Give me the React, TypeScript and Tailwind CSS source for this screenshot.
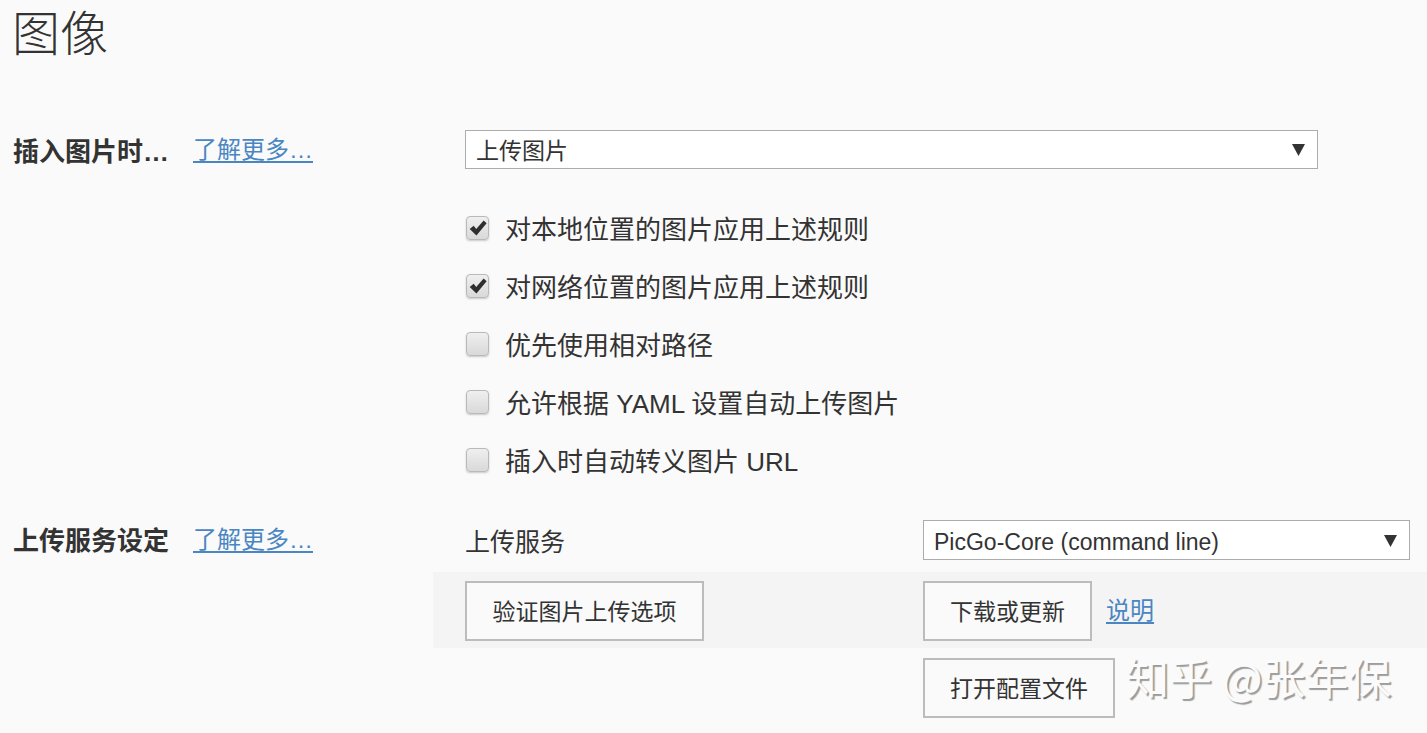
import React from "react";

const FONT = "font-['Liberation_Sans','Noto_Sans_CJK_SC',sans-serif]";

const Arrow = () => (
  <svg width="13" height="13" viewBox="0 0 13 13" className="shrink-0">
    <path d="M0 1 L13 1 L6.5 13 Z" fill="#333" />
  </svg>
);

// 假的下拉框：白底灰边 + 黑色三角
const SelectBox: React.FC<{ value: string; width: string; text: string }> = ({
  value,
  width,
  text,
}) => (
  <div
    className={`${width} h-[39px] shrink-0 bg-white border border-[#acacac] flex items-center justify-between pl-[10px] pr-[12px] ${text}`}
  >
    <span className="leading-none translate-y-[2px]">{value}</span>
    <Arrow />
  </div>
);

const Check: React.FC<{ checked?: boolean; label: string }> = ({
  checked,
  label,
}) => (
  <div className="h-[58px] flex items-center">
    <span className="ml-[1px] shrink-0 w-[23px] h-[24px] rounded-[4px] border border-[#b9b9b9] bg-gradient-to-b from-[#efefef] to-[#d9d9d9] shadow-[0_1px_2px_rgba(0,0,0,0.2)] flex items-center justify-center">
      {checked && (
        <svg width="18" height="16" viewBox="0 0 15 13">
          <path
            d="M0.6 7.4 L3.9 4.6 L6 7.4 L12.2 0.2 L14.7 2.5 L6.2 12.8 Z"
            fill="#2e2e2e"
          />
        </svg>
      )}
    </span>
    <span className="ml-[16px] text-[26px] leading-none text-[#333] translate-y-[2px]">
      {label}
    </span>
  </div>
);

const Btn: React.FC<{ label: string; width: string }> = ({ label, width }) => (
  <button
    className={`${width} h-[60px] border-2 border-[#bcbcbc] bg-[#fafafa] text-[23px] text-[#333] flex items-center justify-center ${FONT}`}
  >
    <span className="translate-y-[1px]">{label}</span>
  </button>
);

const LearnMore = () => (
  <a className="text-[24px] text-[#4a86c2] underline underline-offset-[3px] decoration-[1.5px] leading-none">
    了解更多…
  </a>
);

export default function App() {
  return (
    <div className={`relative min-h-screen bg-[#fafafa] text-[#333] ${FONT}`}>
      <h1 className="pl-[12px] pt-[5px] text-[48px] leading-[60px] font-light text-[#333]">
        图像
      </h1>

      {/* 插入图片时 */}
      <div className="mt-[65px] flex items-center h-[39px]">
        <div className="w-[465px] pl-[13px] flex items-center">
          <span className="w-[180px] text-[26px] font-bold leading-none translate-y-[2px]">
            插入图片时…
          </span>
          <LearnMore />
        </div>
        <SelectBox value="上传图片" width="w-[853px]" text="text-[23px]" />
      </div>

      <div className="pl-[465px] mt-[30px] flex flex-col">
        <Check checked label="对本地位置的图片应用上述规则" />
        <Check checked label="对网络位置的图片应用上述规则" />
        <Check label="优先使用相对路径" />
        <Check label="允许根据 YAML 设置自动上传图片" />
        <Check label="插入时自动转义图片 URL" />
      </div>

      {/* 上传服务设定 */}
      <div className="mt-[31px] flex pb-[17px]">
        <div className="w-[433px] pl-[13px] h-[40px] flex items-center">
          <span className="w-[180px] text-[26px] font-bold leading-none translate-y-[1px]">
            上传服务设定
          </span>
          <LearnMore />
        </div>
        <div className="flex-1 flex flex-col">
          <div className="pl-[32px] flex items-center h-[40px]">
            <span className="w-[458px] text-[25px] leading-none translate-y-[2px]">
              上传服务
            </span>
            <SelectBox
              value="PicGo-Core (command line)"
              width="w-[487px] h-[40px]"
              text="text-[23px]"
            />
          </div>
          <div className="mt-[12px] bg-[#f4f4f4] pl-[32px] pt-[9px] pb-[7px] flex">
            <div className="w-[458px]">
              <Btn label="验证图片上传选项" width="w-[239px]" />
            </div>
            <div className="flex items-center gap-[14px]">
              <Btn label="下载或更新" width="w-[169px]" />
              <a className="text-[24px] text-[#4a86c2] underline underline-offset-[3px] decoration-[1.5px] leading-none">
                说明
              </a>
            </div>
          </div>
          <div className="mt-[10px] pl-[490px]">
            <Btn label="打开配置文件" width="w-[192px]" />
          </div>
        </div>
      </div>

      {/* 水印 */}
      <div className="absolute left-[1126px] top-[648px] text-[43px] leading-[56px] text-[#fbfbfb] [text-shadow:2px_2px_1px_#9c9c9c] font-['Noto_Sans_CJK_SC',sans-serif] pointer-events-none">
        知乎 @张年保
      </div>
    </div>
  );
}
